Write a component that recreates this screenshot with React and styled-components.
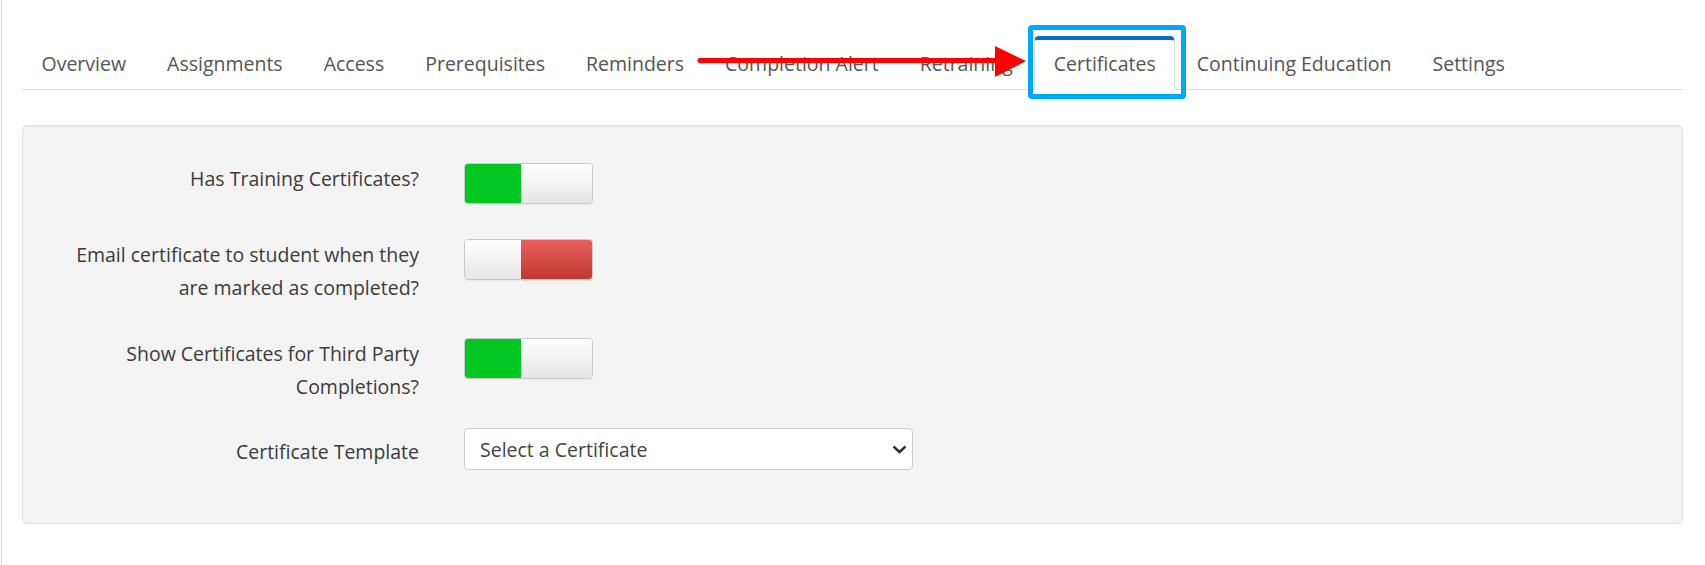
import React from 'react';
import styled, {createGlobalStyle} from 'styled-components';

const GlobalStyle = createGlobalStyle`
  body {
    margin: 0;
    background: #fff;
    font-family: "Open Sans", "Noto Sans", sans-serif;
  }
`;

const Page = styled.div`
  position: relative;
  margin-left: 1px;
  border-left: 1px solid #d4d4d4;
  min-height: 565px;
  box-sizing: border-box;
  padding: 36px 22px 0 20px;
`;

const TabBar = styled.ul`
  display: flex;
  margin: 0;
  padding: 0;
  list-style: none;
  border-bottom: 1px solid #dcdcdc;
`;

const Tab = styled.li`
  margin: 0 2px -1px 0;
  padding: 12px 18.5px 13px;
  line-height: 24px;
  font-size: 19.5px;
  color: #555;
  white-space: nowrap;
  border: 1px solid transparent;
  border-top: 4px solid transparent;
  border-radius: 5px 5px 0 0;
  background: ${p => (p.$active ? '#fff' : 'transparent')};
  ${p => p.$active && `
    border-color: #dcdcdc;
    border-top-color: #0a6bc4;
    border-bottom-color: #fff;
  `}
`;

const Panel = styled.div`
  margin-top: 35px;
  background: #f4f4f4;
  border: 1px solid #e2e2e2;
  border-radius: 5px;
  box-shadow: inset 0 1px 1px rgba(0, 0, 0, 0.04);
  padding: 37px 36px 53px;
`;

const Row = styled.div`
  display: grid;
  grid-template-columns: 360px 449px;
  column-gap: 45px;
  align-items: start;
  margin-top: ${p => p.$mt || 0}px;
`;

const Label = styled.div`
  text-align: right;
  font-size: 19.5px;
  line-height: 32.5px;
  color: #3b3b3b;
  padding-top: ${p => p.$pt || 0}px;
`;

const Switch = styled.div`
  display: flex;
  width: 129px;
  height: 41px;
  box-sizing: border-box;
  border: 1px solid #c9c9c9;
  border-radius: 4px;
  overflow: hidden;
  box-shadow: 0 1px 1px rgba(0, 0, 0, 0.05);
`;

const tones = {
  on: '#00c820',
  off: 'linear-gradient(to bottom, #e95e5e, #c03a30)',
  blank: 'linear-gradient(to bottom, #ffffff, #e6e6e6)',
};

const SwitchPart = styled.span`
  width: ${p => p.$w}px;
  flex: none;
  background: ${p => tones[p.$tone]};
`;

const SelectBox = styled.div`
  position: relative;
  width: 449px;
  height: 42px;
`;

const Select = styled.select`
  appearance: none;
  width: 100%;
  height: 100%;
  box-sizing: border-box;
  padding: 0 40px 0 15px;
  border: 1px solid #cccccc;
  border-radius: 4px;
  background: #fff;
  font-family: "Open Sans", "Noto Sans", sans-serif;
  font-size: 19.5px;
  color: #444;
`;

const Caret = styled.svg`
  position: absolute;
  right: 6px;
  top: 17px;
  pointer-events: none;
`;

const Arrow = styled.svg`
  position: absolute;
  left: 690px;
  top: 40px;
`;

const Highlight = styled.div`
  position: absolute;
  left: 1026px;
  top: 25px;
  width: 158px;
  height: 74px;
  box-sizing: border-box;
  border: 5px solid #00a6ff;
  border-radius: 4px;
`;

const tabs = [
  'Overview', 'Assignments', 'Access', 'Prerequisites', 'Reminders',
  'Completion Alert', 'Retraining', 'Certificates', 'Continuing Education', 'Settings',
];

function Toggle({on}) {
  return (
    <Switch>
      <SwitchPart $w={56} $tone={on ? 'on' : 'blank'} />
      <SwitchPart $w={71} $tone={on ? 'blank' : 'off'} />
    </Switch>
  );
}

export default function App() {
  return (
    <Page>
      <GlobalStyle />
      <TabBar>
        {tabs.map(t => (
          <Tab key={t} $active={t === 'Certificates'}>{t}</Tab>
        ))}
      </TabBar>

      <Panel>
        <Row>
          <Label>Has Training Certificates?</Label>
          <Toggle on />
        </Row>
        <Row $mt={35}>
          <Label>Email certificate to student when they are marked as completed?</Label>
          <Toggle on={false} />
        </Row>
        <Row $mt={34}>
          <Label>Show Certificates for Third Party Completions?</Label>
          <Toggle on />
        </Row>
        <Row $mt={25}>
          <Label $pt={8}>Certificate Template</Label>
          <SelectBox>
            <Select defaultValue="">
              <option value="">Select a Certificate</option>
            </Select>
            <Caret width="15" height="9" viewBox="0 0 15 9">
              <polyline points="1.5,1.5 7.5,7 13.5,1.5" fill="none" stroke="#333" strokeWidth="2.4" />
            </Caret>
          </SelectBox>
        </Row>
      </Panel>

      {/* annotation overlays */}
      <Arrow width="340" height="45" viewBox="0 0 340 45">
        <line x1="8" y1="20.5" x2="306" y2="20.5" stroke="#ff0000" strokeWidth="5" strokeLinecap="round" />
        <polygon points="303,6 334,21 303,37" fill="#ff0000" />
      </Arrow>
      <Highlight />
    </Page>
  );
}
